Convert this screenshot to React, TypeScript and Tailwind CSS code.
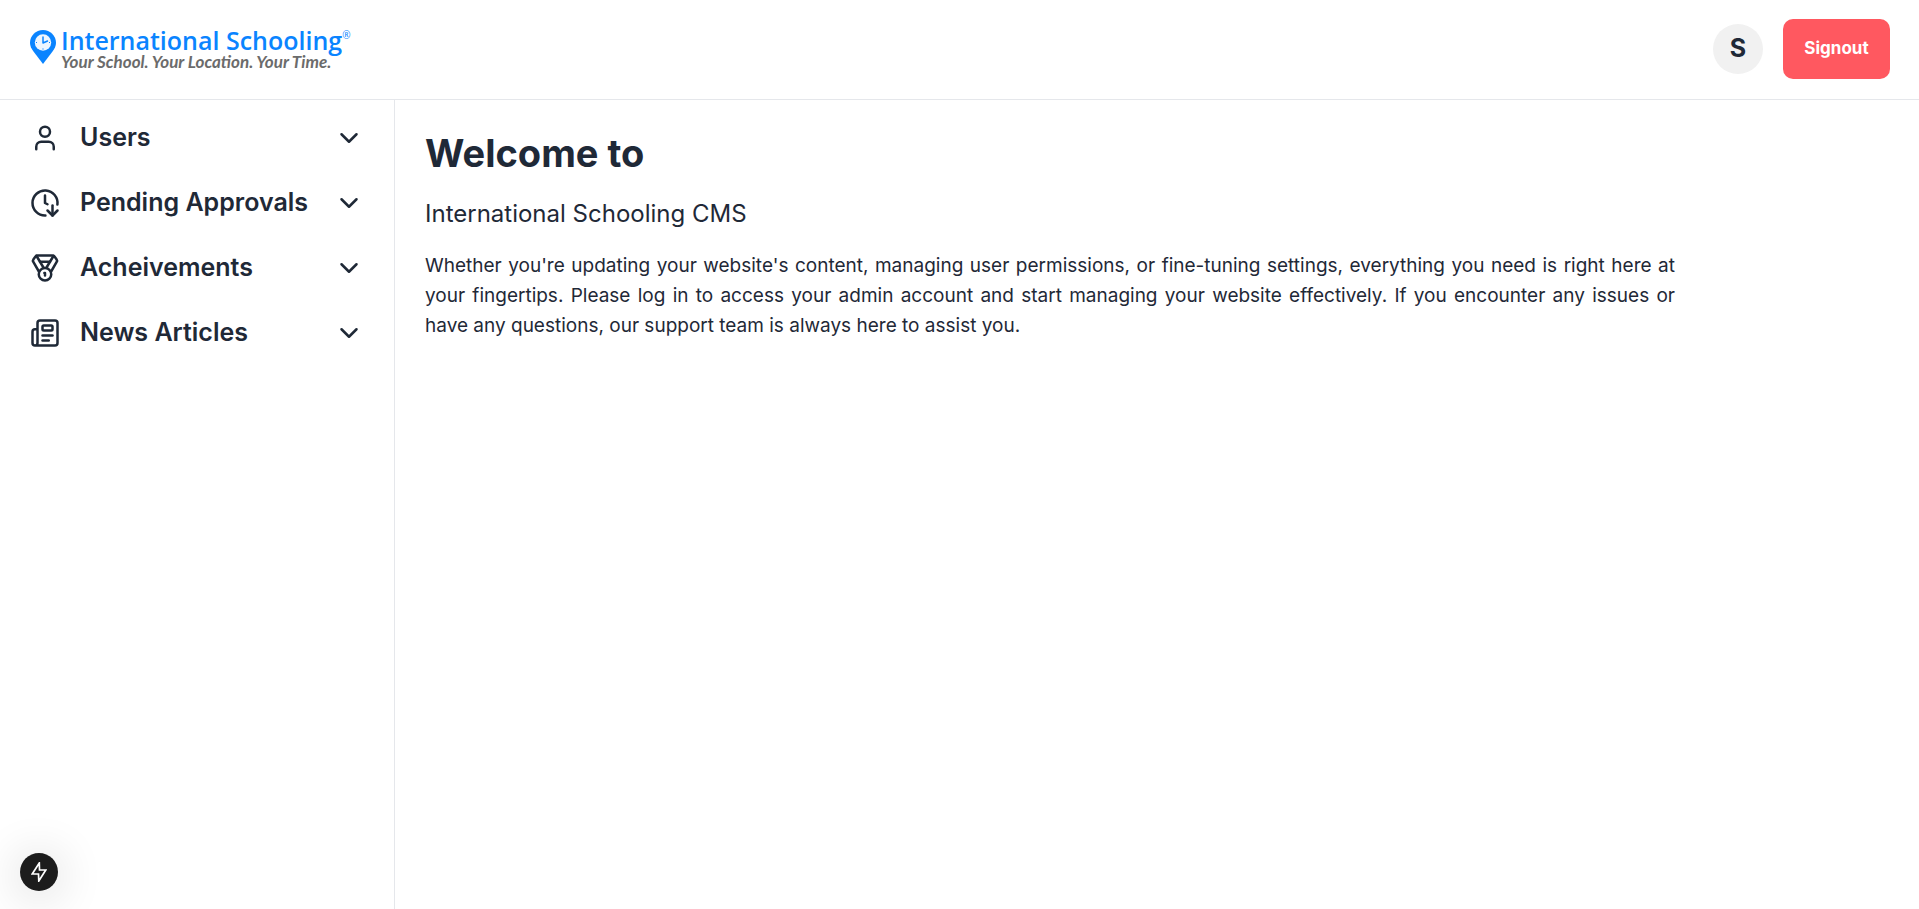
import { ChevronDown, ClockArrowDown, Medal, Newspaper, User } from "lucide-react";
import type { LucideIcon } from "lucide-react";

const menu: { label: string; icon: LucideIcon }[] = [
  { label: "Users", icon: User },
  { label: "Pending Approvals", icon: ClockArrowDown },
  { label: "Acheivements", icon: Medal },
  { label: "News Articles", icon: Newspaper },
];

function Logo() {
  return (
    <a href="#" className="flex items-start gap-1">
      <svg width="28" height="38" viewBox="0 -2 28 38" aria-hidden="true">
        <path d="M14 1C6.800 1 1 6.700 1 13.800C1 17 2.300 19.600 4.500 22.500L14 35L23.500 22.500C25.700 19.600 27 17 27 13.800C27 6.700 21.200 1 14 1Z" fill="#0a84ff" />
        <circle cx="14" cy="13.500" r="8.200" fill="#eef6ff" />
        <path d="M14 8V14L18.500 12" fill="none" stroke="#0a84ff" strokeWidth="1.500" strokeLinecap="round" strokeLinejoin="round" />
        <path d="M14 19.500v1M7 13.500h1M20 13.500h1" stroke="#0a84ff" strokeWidth="1.200" />
      </svg>
      <span className="flex flex-col whitespace-nowrap">
        <span className="flex items-start font-['Open_Sans',sans-serif] text-[25px] leading-[26px] font-semibold text-[#0a84ff]">
          International Schooling
          <span className="text-[10px] leading-4 font-normal">®</span>
        </span>
        <span className="font-['Lato',sans-serif] text-[17px] leading-[18px] font-bold text-[#6b6b6b] italic">
          Your School. Your Location. Your Time.
        </span>
      </span>
    </a>
  );
}

export default function App() {
  return (
    <div className="flex min-h-screen flex-col bg-white font-['Inter',sans-serif] text-[#1f2937]">
      <header className="flex items-center justify-between border-b border-gray-200 px-[29px] pt-[19px] pb-5">
        <Logo />
        <div className="flex items-center gap-5">
          <span className="flex size-[50px] items-center justify-center rounded-full bg-[#f1f1f1] text-[25px] font-bold">S</span>
          <button type="button" className="h-[60px] w-[107px] rounded-[10px] bg-[#ff5860] text-[17px] font-bold text-white">
            Signout
          </button>
        </div>
      </header>
      <div className="flex grow">
        <nav className="w-[395px] shrink-0 border-r border-gray-200 px-[30px] py-[5px]">
          <ul>
            {menu.map(({ label, icon: Icon }) => (
              <li key={label}>
                <button type="button" className="flex h-[65px] w-full items-center gap-5 text-[25px] font-semibold">
                  <Icon size={30} aria-hidden="true" />
                  <span className="grow text-left">{label}</span>
                  <ChevronDown size={30} aria-hidden="true" />
                </button>
              </li>
            ))}
          </ul>
        </nav>
        <main className="grow p-[30px]">
          <div className="max-w-[1250px]">
            <h1 className="text-[38px] leading-[46px] font-bold">Welcome to</h1>
            <h2 className="mt-5 text-[24px] leading-[35px]">International Schooling CMS</h2>
            <p className="mt-5 text-justify text-[19px] leading-[30px]">
              Whether you're updating your website's content, managing user permissions, or fine-tuning settings,
              everything you need is right here at your fingertips. Please log in to access your admin account and
              start managing your website effectively. If you encounter any issues or have any questions, our support
              team is always here to assist you.
            </p>
          </div>
        </main>
      </div>
      <button
        type="button"
        aria-label="Static route"
        className="fixed bottom-[18px] left-5 flex size-[38px] items-center justify-center rounded-full bg-[#1c1c1c] text-white shadow-[0_4px_48px_rgba(0,0,0,0.2)]"
      >
        <svg width="16" height="20" viewBox="0 0 16 20" fill="none" stroke="currentColor" strokeWidth="1.700" aria-hidden="true">
          <path d="M8.300 1L1.200 12H7.500L7.800 19L14.800 8H8.500Z" />
        </svg>
      </button>
    </div>
  );
}
